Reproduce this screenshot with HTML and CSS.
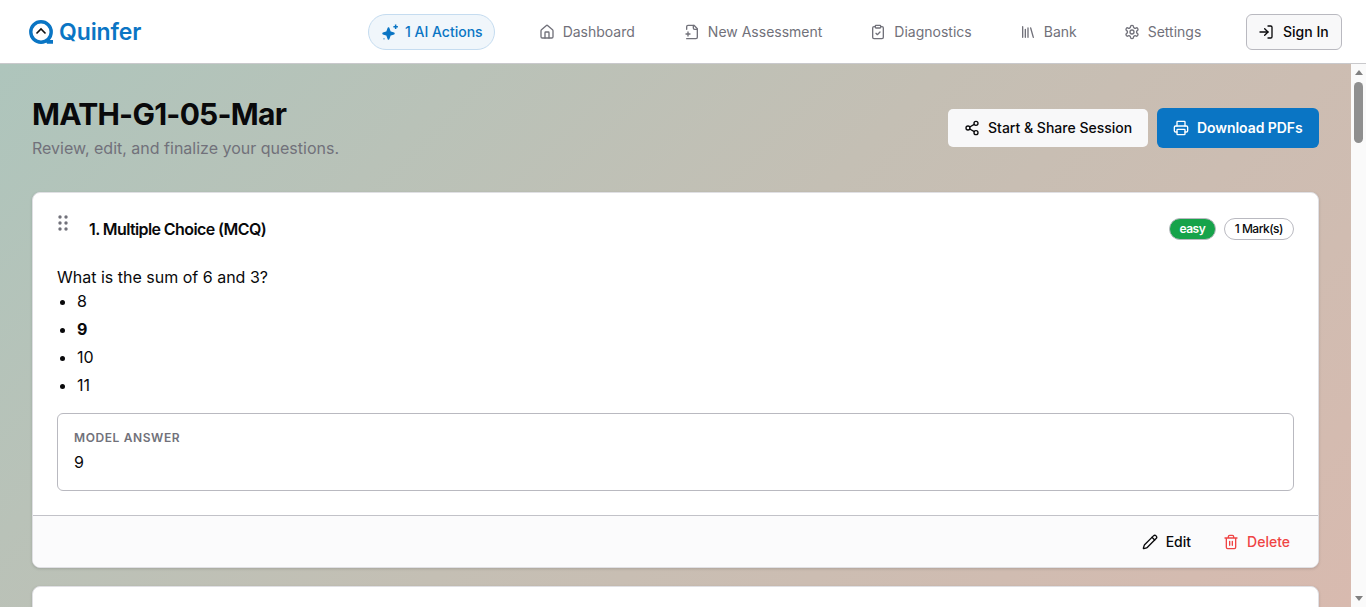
FILE: index.html
```html
<!DOCTYPE html>
<html lang="en">
<head>
<meta charset="utf-8">
<title>Quinfer</title>
<link rel="stylesheet" href="styles.css">
</head>
<body>
<header class="topbar">
  <a class="brand">
    <svg class="brand-mark" viewBox="0 0 24 24" width="24" height="24" fill="none"><circle cx="12" cy="12" r="10.200" stroke="#0a75c4" stroke-width="3.400"/><path d="M16 20h8v3.800h-6z" fill="#0a75c4"/><path d="M7.500 13.500l4.500-4.500 4.500 4.500" stroke="#111" stroke-width="1.600"/></svg>
    <span>Quinfer</span>
  </a>
  <nav class="nav">
    <a class="nav-pill"><svg class="ico ico-spark" viewBox="0 0 24 24" fill="#0a75c4" stroke="#0a75c4" stroke-width="2.600"><path d="M10 7l1.800 5.200 5.200 1.800-5.200 1.800L10 21l-1.800-5.200L3 14l5.200-1.800z" stroke-linejoin="round"/><path d="M19.500 2v6M16.500 5h6M4 20.500v1" fill="none" stroke-width="2"/></svg>1 AI Actions</a>
    <a class="nav-link nl1"><svg class="ico" viewBox="0 0 24 24" fill="none" stroke="currentColor" stroke-width="2" stroke-linecap="round" stroke-linejoin="round"><path d="M15 21v-8a1 1 0 0 0-1-1h-4a1 1 0 0 0-1 1v8"/><path d="M3 10a2 2 0 0 1 .7-1.500l7-6a2 2 0 0 1 2.600 0l7 6a2 2 0 0 1 .7 1.500v9a2 2 0 0 1-2 2H5a2 2 0 0 1-2-2z"/></svg>Dashboard</a>
    <a class="nav-link nl2"><svg class="ico" viewBox="0 0 24 24" fill="none" stroke="currentColor" stroke-width="2" stroke-linecap="round" stroke-linejoin="round"><path d="M4 22h14a2 2 0 0 0 2-2V7l-5-5H6a2 2 0 0 0-2 2v4"/><path d="M14 2v4a2 2 0 0 0 2 2h4"/><path d="M3 15h6M6 12v6"/></svg>New Assessment</a>
    <a class="nav-link nl3"><svg class="ico" viewBox="0 0 24 24" fill="none" stroke="currentColor" stroke-width="2" stroke-linecap="round" stroke-linejoin="round"><rect x="8" y="2" width="8" height="4" rx="1"/><path d="M16 4h2a2 2 0 0 1 2 2v14a2 2 0 0 1-2 2H6a2 2 0 0 1-2-2V6a2 2 0 0 1 2-2h2"/><path d="M9 14l2 2 4-4"/></svg>Diagnostics</a>
    <a class="nav-link nl4"><svg class="ico" viewBox="0 0 24 24" fill="none" stroke="currentColor" stroke-width="2" stroke-linecap="round" stroke-linejoin="round"><path d="M16 6l4 14M12 6v14M8 8v12M4 4v16"/></svg>Bank</a>
    <a class="nav-link nl5"><svg class="ico" viewBox="0 0 24 24" fill="none" stroke="currentColor" stroke-width="2" stroke-linecap="round" stroke-linejoin="round"><path d="M12.220 2h-.440a2 2 0 0 0-2 2v.180a2 2 0 0 1-1 1.730l-.430.250a2 2 0 0 1-2 0l-.150-.080a2 2 0 0 0-2.730.730l-.220.380a2 2 0 0 0 .730 2.730l.150.100a2 2 0 0 1 1 1.720v.510a2 2 0 0 1-1 1.740l-.150.090a2 2 0 0 0-.730 2.730l.220.380a2 2 0 0 0 2.730.730l.150-.080a2 2 0 0 1 2 0l.430.250a2 2 0 0 1 1 1.730V20a2 2 0 0 0 2 2h.440a2 2 0 0 0 2-2v-.180a2 2 0 0 1 1-1.730l.430-.250a2 2 0 0 1 2 0l.150.080a2 2 0 0 0 2.730-.730l.220-.390a2 2 0 0 0-.730-2.730l-.150-.080a2 2 0 0 1-1-1.740v-.500a2 2 0 0 1 1-1.740l.150-.090a2 2 0 0 0 .730-2.730l-.220-.380a2 2 0 0 0-2.730-.730l-.150.080a2 2 0 0 1-2 0l-.430-.250a2 2 0 0 1-1-1.730V4a2 2 0 0 0-2-2z"/><circle cx="12" cy="12" r="3"/></svg>Settings</a>
  </nav>
  <a class="signin"><svg class="ico" viewBox="0 0 24 24" fill="none" stroke="currentColor" stroke-width="2" stroke-linecap="round" stroke-linejoin="round"><path d="M15 3h4a2 2 0 0 1 2 2v14a2 2 0 0 1-2 2h-4"/><path d="M10 17l5-5-5-5"/><path d="M15 12H3"/></svg>Sign In</a>
</header>
<div class="workspace">
<main class="page">
  <section class="head">
    <div>
      <h1>MATH-G1-05-Mar</h1>
      <p class="sub">Review, edit, and finalize your questions.</p>
    </div>
    <div class="head-actions">
      <button class="btn btn-light"><svg class="ico" viewBox="0 0 24 24" fill="none" stroke="currentColor" stroke-width="2" stroke-linecap="round" stroke-linejoin="round"><circle cx="18" cy="5" r="3"/><circle cx="6" cy="12" r="3"/><circle cx="18" cy="19" r="3"/><path d="M8.590 13.510l6.830 3.980M15.410 6.510l-6.820 3.980"/></svg>Start &amp; Share Session</button>
      <button class="btn btn-blue"><svg class="ico" viewBox="0 0 24 24" fill="none" stroke="currentColor" stroke-width="2" stroke-linecap="round" stroke-linejoin="round"><path d="M6 18H4a2 2 0 0 1-2-2v-5a2 2 0 0 1 2-2h16a2 2 0 0 1 2 2v5a2 2 0 0 1-2 2h-2"/><path d="M6 9V3a1 1 0 0 1 1-1h10a1 1 0 0 1 1 1v6"/><rect x="6" y="14" width="12" height="8" rx="1"/></svg>Download PDFs</button>
    </div>
  </section>
  <article class="card">
    <div class="card-head">
      <div class="card-title">
        <svg class="grip" viewBox="0 0 10 16" width="10" height="16" fill="#71717a"><circle cx="2" cy="2" r="1.700"/><circle cx="8" cy="2" r="1.700"/><circle cx="2" cy="8" r="1.700"/><circle cx="8" cy="8" r="1.700"/><circle cx="2" cy="14" r="1.700"/><circle cx="8" cy="14" r="1.700"/></svg>
        <h2>1. Multiple Choice (MCQ)</h2>
      </div>
      <div class="badges"><span class="badge badge-green">easy</span><span class="badge badge-outline">1 Mark(s)</span></div>
    </div>
    <div class="card-body">
      <p class="question">What is the sum of 6 and 3?</p>
      <ul class="options">
        <li>8</li>
        <li class="correct">9</li>
        <li>10</li>
        <li>11</li>
      </ul>
      <div class="answer">
        <div class="answer-label">MODEL ANSWER</div>
        <div class="answer-value">9</div>
      </div>
    </div>
    <div class="card-foot">
      <a class="act"><svg class="ico" viewBox="0 0 24 24" fill="none" stroke="currentColor" stroke-width="2" stroke-linecap="round" stroke-linejoin="round"><path d="M21.170 6.810a1 1 0 0 0-3.990-3.990L3.840 16.170a2 2 0 0 0-.500.830l-1.320 4.350a.500.500 0 0 0 .620.620l4.350-1.320a2 2 0 0 0 .830-.500z"/><path d="M15 5l4 4"/></svg>Edit</a>
      <a class="act act-red"><svg class="ico" viewBox="0 0 24 24" fill="none" stroke="currentColor" stroke-width="2" stroke-linecap="round" stroke-linejoin="round"><path d="M3 6h18M19 6v14c0 1-1 2-2 2H7c-1 0-2-1-2-2V6M8 6V4c0-1 1-2 2-2h4c1 0 2 1 2 2v2M10 11v6M14 11v6"/></svg>Delete</a>
    </div>
  </article>
  <article class="card card-next"></article>
</main>
<aside class="scrollbar" aria-hidden="true">
  <span class="sb-btn"><span class="sb-up"></span></span>
  <span class="sb-track"><span class="sb-thumb"></span></span>
  <span class="sb-btn"><span class="sb-down"></span></span>
</aside>
</div>
</body>
</html>
```
FILE: styles.css
```css
* { box-sizing: border-box; }
html, body { margin: 0; height: 100%; overflow: hidden; }
body { font-family: Inter, "Liberation Sans", sans-serif; color: #09090b; display: flex; flex-direction: column; height: 100vh; }
h1, h2, p, ul { margin: 0; }

.topbar { height: 64px; flex: none; background: #fff; display: flex; align-items: center; padding: 0 24px 0 29px; border-bottom: 1px solid #c9c9cc; }
.brand { display: flex; align-items: center; gap: 6px; font-size: 23px; font-weight: 600; letter-spacing: -0.1px; color: #0a75c4; width: 339px; flex: none; }
.brand-mark { flex: none; }
.nav { display: flex; align-items: center; font-size: 14px; flex: 1; }
.ico { width: 16px; height: 16px; flex: none; }
.ico-spark { width: 18px; height: 18px; }
.nav-pill { display: flex; align-items: center; gap: 6px; height: 36px; padding: 0 11px 0 12px; border: 1px solid #c5dcf0; border-radius: 18px; background: #f0f6fb; color: #0a75c4; font-weight: 500; }
.nav-link { display: flex; align-items: center; gap: 8px; height: 36px; color: #71717a; font-weight: 400; }
.nl1 { margin-left: 44px; }
.nl2 { margin-left: 49px; }
.nl3, .nl4 { margin-left: 48px; }
.nl5 { margin-left: 47px; }
.signin { display: flex; align-items: center; gap: 9px; height: 36px; width: 96px; flex: none; white-space: nowrap; padding: 0 0 0 11px; border: 1px solid #b9b9c0; border-radius: 6px; background: #f8f8f9; font-size: 14px; font-weight: 500; }

.workspace { flex: 1; min-height: 0; display: flex; }
.page { flex: 1; min-width: 0; overflow: hidden; padding: 32px; background: linear-gradient(135deg, #aec5bc 0%, #c4bfb4 50%, #d8baaf 100%); }
.scrollbar { width: 15px; flex: none; display: flex; flex-direction: column; background: #fafafa; }
.sb-btn { height: 17px; flex: none; display: flex; align-items: center; justify-content: center; }
.sb-up { border-left: 4.500px solid transparent; border-right: 4.500px solid transparent; border-bottom: 5px solid #808080; }
.sb-down { border-left: 4.500px solid transparent; border-right: 4.500px solid transparent; border-top: 5px solid #808080; }
.sb-track { flex: 1; padding: 1px 3px 0; }
.sb-thumb { display: block; height: 61px; background: #8f8f8f; border-radius: 5px; }

.head { display: flex; justify-content: space-between; align-items: center; margin-bottom: 32px; }
h1 { font-size: 30px; font-weight: 700; line-height: 36px; letter-spacing: -0.75px; }
.sub { font-size: 16px; line-height: 24px; color: #71717a; margin-top: 4px; }
.head-actions { display: flex; gap: 8px; align-items: center; }
.btn { display: flex; align-items: center; gap: 8px; font: 500 14px Inter, sans-serif; border-radius: 6px; padding: 0 16px 1px; cursor: pointer; white-space: nowrap; }
.btn-light { height: 40px; width: 202px; background: #f8f8f9; background-clip: padding-box; color: #09090b; border: 1px solid transparent; }
.btn-blue { height: 40px; width: 162px; background: #0a75c4; color: #fff; border: 0; font-weight: 600; letter-spacing: -0.06px; }

.card { background: #fff; border: 1px solid #e0e0e4; border-radius: 8px; box-shadow: 0 1px 3px rgba(0,0,0,.15); overflow: hidden; margin-bottom: 18px; }
.card-next { height: 200px; }
.card-head { display: flex; justify-content: space-between; align-items: center; padding: 12px 24px 0; height: 60px; }
.card-title { display: flex; align-items: center; gap: 21px; }
.grip { margin: -12px 0 0 1px; }
h2 { font-size: 16px; font-weight: 600; letter-spacing: -0.6px; line-height: 24px; }
.badges { display: flex; gap: 8px; }
.badge { display: block; height: 22px; line-height: 20px; border-radius: 11px; font-size: 12px; padding: 0 10px; letter-spacing: -0.5px; border: 1px solid #b9b9c0; }
.badge-green { background: #16a34a; color: #fff; font-weight: 600; padding: 0 9.500px; }
.badge-outline { background: #fff; color: #09090b; font-weight: 500; }
.card-body { padding: 12px 24px 24px; font-size: 16px; }
.question { line-height: 24px; }
.options { padding-left: 20px; line-height: 24px; margin-bottom: 16px; }
.options li { margin-bottom: 4px; }
.correct { font-weight: 700; }
.answer { height: 78px; border: 1px solid #b9b9c0; border-radius: 6px; padding: 16px; }
.answer-label { font-size: 12px; font-weight: 600; line-height: 16px; letter-spacing: .6px; color: #71717a; }
.answer-value { line-height: 24px; margin-top: 4px; }
.card-foot { height: 52px; border-top: 1px solid #c2c2c8; background: #fbfbfc; display: flex; justify-content: flex-end; align-items: center; padding: 0 28px 0 0; font-size: 14px; font-weight: 500; gap: 32px; }
.act { display: flex; align-items: center; gap: 8px; }
.act-red { color: #ef4444; }
```
